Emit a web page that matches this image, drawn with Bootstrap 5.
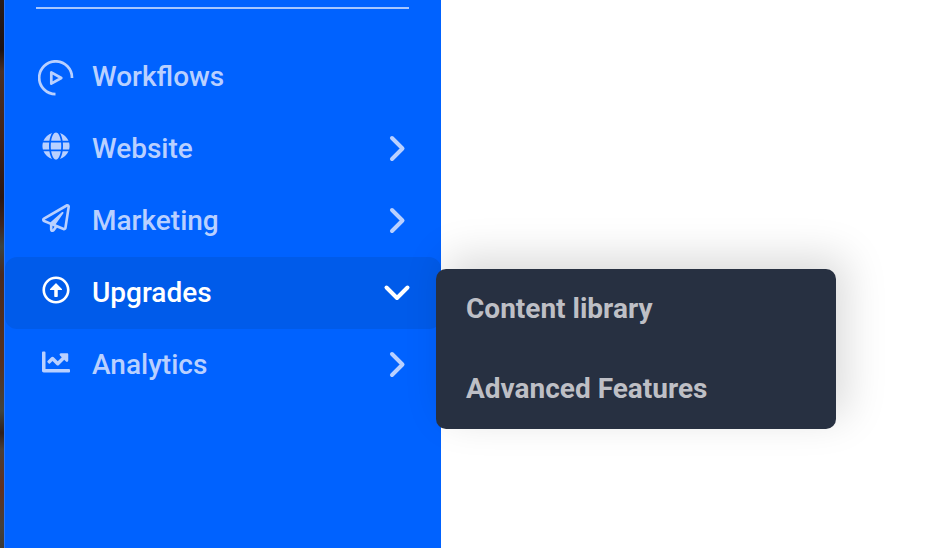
<!DOCTYPE html>
<html lang="en">
<head>
<meta charset="utf-8">
<meta name="viewport" content="width=device-width, initial-scale=1">
<title>Sidebar navigation</title>
<link href="https://cdn.jsdelivr.net/npm/bootstrap@5.3.0/dist/css/bootstrap.min.css" rel="stylesheet">
<style>
body{font-family:Roboto,"Liberation Sans",sans-serif;background:#fff;font-size:28px;line-height:1}
.backdrop-strip{width:4px;background:linear-gradient(#2a1c1a 0,#1c1213 9%,#4a3026 13%,#432418 25%,#2b1612 36%,#3f2620 41%,#3b4442 45%,#4a2a1e 50%,#53301f 62%,#57301f 66%,#41443d 75%,#30201c 79%,#4a3f36 82%,#63301f 89%,#45403a 96%,#3b3a36 100%)}
.side-panel{width:437px;background:#0062ff;border-left:1px solid #2d77f5}
.side-rule{height:2px;margin:7px 32px 32px 31px;background:#a6c6ff}
.side-link{height:72px;padding:0 30px 0 31px;color:#b9d0ff;font-weight:500;border-radius:12px;text-decoration:none}
.side-link.current{background:#005bea;color:#fff}
.side-icon{width:40px;height:40px;margin-right:16px}
.side-icon svg{display:block;margin-top:-6px}
.side-icon svg.play-ring{margin-top:1px;margin-left:-1px}
.chev{width:28px;height:28px;margin-top:-3px;fill:none;stroke:currentColor;stroke-width:4;stroke-linecap:round;stroke-linejoin:round}
.flyout{left:436px;top:269px;width:400px;height:160px;background:#273041;border-radius:10px;box-shadow:10px -12px 42px rgba(0,0,0,.15)}
.flyout a{height:80px;padding:0 30px;color:#bebfc5;font-weight:700;text-decoration:none}
</style>
</head>
<body class="vh-100 overflow-hidden position-relative">
<div class="d-flex h-100">
  <div class="backdrop-strip"></div>
  <aside class="side-panel">
    <div class="overflow-hidden"><div class="side-rule"></div></div>
    <nav class="d-flex flex-column">
      <a href="#" class="side-link d-flex align-items-center">
        <span class="side-icon d-flex align-items-center justify-content-center"><svg class="play-ring" width="36" height="36" viewBox="0 0 36 36" fill="none" stroke="currentColor" stroke-width="2.7" stroke-linecap="butt" stroke-linejoin="round"><path d="M34 18A16.400 16.400 0 1 0 17.500 34.100"/><path d="M13.300 12.300v11.400l10-5.700z"/></svg></span>
        <span class="flex-grow-1">Workflows</span>
      </a>
      <a href="#" class="side-link d-flex align-items-center">
        <span class="side-icon d-flex align-items-center justify-content-center"><svg width="28" height="28" viewBox="-8 0 512 512" fill="currentColor"><path d="M336.5 160C322 70.7 287.8 8 248 8s-74 62.7-88.5 152h177zM152 256c0 22.2 1.2 43.5 3.3 64h185.3c2.1-20.5 3.3-41.8 3.3-64s-1.2-43.5-3.3-64H155.3c-2.1 20.5-3.3 41.8-3.3 64zm324.7-96c-28.6-67.9-86.5-120.4-158-141.6 24.4 33.8 41.2 84.7 50 141.6h108zM177.2 18.4C105.8 39.6 47.8 92.1 19.3 160h108c8.700-56.900 25.500-107.800 49.900-141.600zM487.400 192H372.700c2.100 21 3.300 42.500 3.300 64s-1.200 43-3.300 64h114.600c5.500-20.500 8.600-41.800 8.600-64s-3.100-43.500-8.500-64zM120 256c0-21.500 1.200-43 3.300-64H8.600C3.200 212.500 0 233.800 0 256s3.200 43.500 8.600 64h114.600c-2-21-3.200-42.500-3.200-64zm39.500 96c14.500 89.300 48.700 152 88.500 152s74-62.700 88.500-152h-177zm159.300 141.600c71.400-21.200 129.400-73.700 158-141.600h-108c-8.800 56.900-25.600 107.800-50 141.600zM19.300 352c28.600 67.900 86.500 120.400 158 141.600-24.400-33.800-41.200-84.700-50-141.600h-108z"/></svg></span>
        <span class="flex-grow-1">Website</span>
        <svg class="chev" viewBox="0 0 28 28"><path d="M9 4l10.500 10.500L9 25"/></svg>
      </a>
      <a href="#" class="side-link d-flex align-items-center">
        <span class="side-icon d-flex align-items-center justify-content-center"><svg width="28" height="28" viewBox="0 0 512 512" fill="currentColor"><path d="M440 6.500L24 246.400c-34.400 19.900-31.100 70.800 5.700 85.900L144 379.600V464c0 46.400 59.200 65.500 86.600 28.600l43.800-59.100 111.900 46.200c5.900 2.400 12.100 3.600 18.300 3.600 8.200 0 16.300-2.100 23.600-6.200 12.800-7.200 21.600-20 23.900-34.500l59.400-387.200c6.100-40.100-36.900-68.800-71.500-48.900zM192 464v-64.600l36.600 15.100L192 464zm212.600-28.700l-153.800-63.500L391 169.500c10.700-15.500-9.500-33.500-23.700-21.200L155.800 332.600 48 288 464 48l-59.400 387.300z"/></svg></span>
        <span class="flex-grow-1">Marketing</span>
        <svg class="chev" viewBox="0 0 28 28"><path d="M9 4l10.500 10.500L9 25"/></svg>
      </a>
      <a href="#" class="side-link current d-flex align-items-center">
        <span class="side-icon d-flex align-items-center justify-content-center"><svg width="28" height="28" viewBox="0 0 512 512" fill="currentColor"><path d="M256 504c137 0 248-111 248-248S393 8 256 8 8 119 8 256s111 248 248 248zm0-448c110.500 0 200 89.500 200 200s-89.500 200-200 200S56 366.500 56 256 145.500 56 256 56zm20 328h-40c-6.600 0-12-5.400-12-12V256h-67c-10.700 0-16-12.900-8.500-20.500l99-99c4.700-4.700 12.300-4.700 17 0l99 99c7.600 7.600 2.200 20.500-8.500 20.500h-67v116c0 6.600-5.400 12-12 12z"/></svg></span>
        <span class="flex-grow-1">Upgrades</span>
        <svg class="chev" viewBox="0 0 28 28"><path d="M3.500 9.500L14 20 24.500 9.500"/></svg>
      </a>
      <a href="#" class="side-link d-flex align-items-center">
        <span class="side-icon d-flex align-items-center justify-content-center"><svg width="28" height="28" viewBox="0 0 512 512" fill="currentColor"><path d="M496 384H64V80c0-8.840-7.160-16-16-16H16C7.160 64 0 71.160 0 80v336c0 17.670 14.330 32 32 32h464c8.840 0 16-7.160 16-16v-32c0-8.840-7.160-16-16-16zM464 96H345.940c-21.380 0-32.090 25.850-16.970 40.970l32.400 32.400L288 242.750l-73.370-73.370c-12.500-12.500-32.760-12.500-45.250 0l-68.690 68.690c-6.250 6.250-6.250 16.380 0 22.630l22.620 22.620c6.250 6.250 16.380 6.250 22.630 0L192 237.250l73.370 73.370c12.500 12.500 32.760 12.500 45.250 0l96-96 32.400 32.400c15.120 15.120 40.970 4.410 40.970-16.970V112c.01-8.840-7.150-16-15.990-16z"/></svg></span>
        <span class="flex-grow-1">Analytics</span>
        <svg class="chev" viewBox="0 0 28 28"><path d="M9 4l10.500 10.500L9 25"/></svg>
      </a>
    </nav>
  </aside>
</div>
<div class="flyout position-absolute d-flex flex-column">
  <a href="#" class="d-flex align-items-center">Content library</a>
  <a href="#" class="d-flex align-items-center">Advanced Features</a>
</div>
<script src="https://cdn.jsdelivr.net/npm/bootstrap@5.3.0/dist/js/bootstrap.bundle.min.js"></script>
</body>
</html>
